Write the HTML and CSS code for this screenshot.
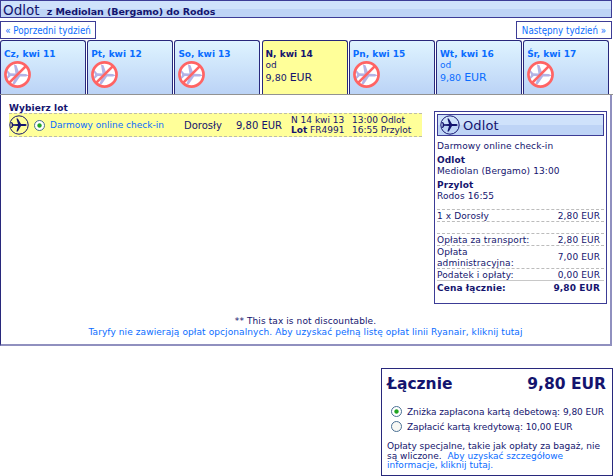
FILE: index.html
```html
<!DOCTYPE html>
<html lang="pl">
<head>
    <meta charset="UTF-8">
    <title>Odlot z Mediolan (Bergamo) do Rodos</title>
    <link rel="stylesheet" href="styles.css">
</head>
<body>
    <svg width="0" height="0" class="symbols">
        <symbol id="plane" viewBox="0 0 20 20">
            <circle cx="10" cy="10" r="9.2" fill="none" stroke="currentColor" stroke-width="1"/>
            <path fill="currentColor" d="M18 10 L16.5 9 L12 9 L8.8 3.5 L7.4 3.5 L9 9 L4.4 9.2 L3 7 L2 7 L2.8 10 L2 13 L3 13 L4.4 10.8 L9 11 L7.4 16.5 L8.8 16.5 L12 11 L16.5 11 Z"/>
        </symbol>
        <symbol id="no-flight" viewBox="0 0 26 26">
            <circle cx="13" cy="13" r="12" fill="#fff"/>
            <path fill="#b3b3e6" d="M24 14 L21 12.4 L15 12.2 L12 4 L9.6 3.4 L11 12 L6 11.8 L3 8.5 L2 9 L4 13.3 L2 17 L3.4 17.3 L6.5 14.4 L11 14.6 L8 22.5 L10.4 22.5 L15.5 15 L21 15 Z"/>
            <circle cx="13" cy="13" r="11.6" fill="none" stroke="#ff6464" stroke-width="2.6"/>
            <path d="M21.3 4.7 L4.7 21.3" stroke="#ff6464" stroke-width="2.6"/>
        </symbol>
    </svg>

    <h1 class="header"><span>Odlot</span> z Mediolan (Bergamo) do Rodos</h1>

    <nav class="weeks">
        <a href="#" class="prev">« Poprzedni tydzień</a>
        <a href="#" class="next">Następny tydzień »</a>
    </nav>

    <div class="tabs">
        <a href="#" class="tab"><b>Cz, kwi 11</b><svg><use href="#no-flight"/></svg></a>
        <a href="#" class="tab"><b>Pt, kwi 12</b><svg><use href="#no-flight"/></svg></a>
        <a href="#" class="tab"><b>So, kwi 13</b><svg><use href="#no-flight"/></svg></a>
        <a href="#" class="tab selected"><b>N, kwi 14</b><small>od</small><span class="fare">9,80 <i>EUR</i></span></a>
        <a href="#" class="tab"><b>Pn, kwi 15</b><svg><use href="#no-flight"/></svg></a>
        <a href="#" class="tab"><b>Wt, kwi 16</b><small>od</small><span class="fare">9,80 <i>EUR</i></span></a>
        <a href="#" class="tab"><b>Śr, kwi 17</b><svg><use href="#no-flight"/></svg></a>
    </div>

    <div class="panel">
        <div class="panel-body">
            <div class="flights">
                <h2>Wybierz lot</h2>
                <div class="flight">
                    <svg class="plane"><use href="#plane"/></svg>
                    <span class="radio checked"></span>
                    <a href="#" class="fare-type">Darmowy online check-in</a>
                    <span class="passenger">Dorosły</span>
                    <span class="price">9,80 EUR</span>
                    <div class="flight-no"><div>N 14 kwi 13</div><div><b>Lot</b> FR4991</div></div>
                    <div class="times"><div>13:00 Odlot</div><div>16:55 Przylot</div></div>
                </div>
            </div>

            <div class="summary">
                <h3><svg class="plane"><use href="#plane"/></svg><span>Odlot</span></h3>
                <p>Darmowy online check-in</p>
                <p><b>Odlot</b><br>Mediolan (Bergamo) 13:00</p>
                <p><b>Przylot</b><br>Rodos 16:55</p>
                <div class="costs">
                    <div class="cost adult"><span>1 x Dorosły</span><span>2,80 EUR</span></div>
                    <div class="cost"></div>
                    <div class="cost"><span>Opłata za transport:</span><span>2,80 EUR</span></div>
                    <div class="cost tall"><span>Opłata<br>administracyjna:</span><span>7,00 EUR</span></div>
                    <div class="cost taxes"><span>Podatek i opłaty:</span><span>0,00 EUR</span></div>
                    <div class="cost sum"><span>Cena łącznie:</span><span>9,80 EUR</span></div>
                </div>
            </div>
        </div>
        <div class="notes">
            <p>** This tax is not discountable.</p>
            <a href="#">Taryfy nie zawierają opłat opcjonalnych. Aby uzyskać pełną listę opłat linii Ryanair, kliknij tutaj</a>
        </div>
    </div>

    <div class="total">
        <div class="total-head"><span>Łącznie</span><span>9,80 EUR</span></div>
        <div class="payment"><span class="radio checked"></span><span>Zniżka zapłacona kartą debetową: 9,80 EUR</span></div>
        <div class="payment"><span class="radio"></span><span>Zapłacić kartą kredytową: 10,00 EUR</span></div>
        <p>Opłaty specjalne, takie jak opłaty za bagaż, nie<br>są wliczone.&nbsp; <a href="#">Aby uzyskać szczegółowe<br>informacje, kliknij tutaj.</a></p>
    </div>
</body>
</html>
```

FILE: styles.css
```css
* {
    box-sizing: border-box;
}

body {
    margin: 0;
    width: 613px;
    height: 476px;
    overflow: hidden;
    background: #fff;
    color: #14146e;
    font-family: Verdana, "DejaVu Sans", sans-serif;
    font-size: 9px;
    line-height: 11px;
    white-space: nowrap;
}

h1, h2, h3, p {
    margin: 0;
}

a {
    color: #0a6cff;
    text-decoration: none;
}

.symbols {
    display: block;
}

.header {
    width: 612px;
    height: 18px;
    padding-left: 2px;
    border: 1px solid #3c3c96;
    background: linear-gradient(#cfe2fb 50%, #bed4f6 50%);
    font-size: 9.5px;
    line-height: 18px;
    letter-spacing: -0.07px;
}

.header span {
    margin-right: 4px;
    font-size: 13.5px;
    font-weight: normal;
    letter-spacing: 0;
}

.weeks {
    display: flex;
    justify-content: space-between;
    width: 612px;
    height: 18px;
    margin-top: 3px;
}

.weeks a {
    width: 96px;
    border: 1px solid #3c3c96;
    font-family: Tahoma, "DejaVu Sans Condensed", sans-serif;
    font-size: 9.7px;
    line-height: 18px;
    text-align: center;
}

.tabs {
    display: flex;
    gap: 1.2px;
    height: 55px;
    margin-top: 1px;
    border-bottom: 1px solid #929292;
}

.tab {
    display: flex;
    flex-direction: column;
    width: 86px;
    padding: 7px 3px 0;
    border: 1px solid #28287c;
    border-bottom: 0;
    border-radius: 3px 3px 0 0;
    background: linear-gradient(#dff4ff, #bbd3f6);
}

.tab b {
    height: 12px;
    line-height: 12px;
}

.tab svg {
    width: 27px;
    height: 27px;
    margin-top: 1px;
}

.tab small {
    font-size: 9px;
    line-height: 10px;
}

.tab .fare {
    font-size: 9.5px;
    line-height: 16px;
}

.tab .fare i {
    font-size: 11px;
    font-style: normal;
    letter-spacing: -0.1px;
}

.tab.selected {
    background: #ffff99;
    color: #14146e;
}

.panel {
    width: 612px;
    height: 251px;
    border: solid #9090bf;
    border-width: 0 2px 2px 1px;
    border-left-color: #28287c;
}

.panel-body {
    display: flex;
    justify-content: space-between;
    height: 221px;
    padding: 8px 3px 0 8px;
}

.flights {
    width: 413px;
}

.flights h2 {
    height: 10px;
    font-size: 9px;
    line-height: 11px;
    letter-spacing: 0.1px;
}

.flight {
    display: grid;
    grid-template-columns: 25px 16px 134px 52px 55px 61px 1fr;
    align-items: center;
    height: 24px;
    border: dashed #bcbcaa;
    border-width: 1px 0;
    background: #ffff99;
}

.plane {
    width: 20px;
    height: 20px;
}

.radio {
    width: 11px;
    height: 11px;
    border: 1px solid #4a7094;
    border-radius: 50%;
    background: #f8f8f4;
}

.radio.checked {
    background: radial-gradient(circle, #22a522 0, #22a522 1.7px, #fff 2.6px);
}

.passenger, .price {
    font-size: 10px;
}

.flight-no, .times {
    line-height: 10px;
}

.summary {
    width: 173px;
    height: 193px;
    margin-top: 8px;
    padding: 2px;
    border: 1px solid #3c3c96;
    letter-spacing: 0.1px;
}

.summary h3 {
    display: flex;
    align-items: center;
    gap: 3px;
    width: 167px;
    height: 22px;
    margin-bottom: 5px;
    padding-left: 2px;
    border: 1px solid #3c3c96;
    background: linear-gradient(#cfe2fb 50%, #bed4f6 50%);
    font-size: 13px;
    font-weight: normal;
}

.summary p {
    margin-bottom: 3px;
}

.costs {
    width: 167px;
    margin-top: 7px;
    border-top: 1px dashed #bcbcbc;
}

.cost {
    display: flex;
    align-items: center;
    justify-content: space-between;
    height: 12px;
    padding: 1px 4px 0 0;
    border-bottom: 1px dashed #bcbcbc;
}

.cost.adult {
    line-height: 13px;
}

.cost.tall {
    height: 23px;
}

.cost.taxes {
    border-bottom: 1px solid #c8c8c8;
}

.cost.sum {
    height: 13px;
    border: 0;
    font-weight: bold;
}

.notes {
    text-align: center;
    line-height: 10.5px;
    letter-spacing: 0.09px;
}

.total {
    width: 232px;
    height: 108px;
    margin: 22px 0 0 381px;
    padding: 4px 6px 0 5px;
    border: 1px solid #28287c;
}

.total-head {
    display: flex;
    justify-content: space-between;
    margin-bottom: 9px;
    font-size: 15.5px;
    font-weight: bold;
    line-height: 23px;
}

.payment {
    display: flex;
    align-items: center;
    gap: 5px;
    height: 15px;
    padding-left: 4px;
    letter-spacing: -0.05px;
}

.payment .radio {
    margin-bottom: 3px;
}

.total p {
    margin-top: 7px;
    line-height: 9.7px;
}
```
